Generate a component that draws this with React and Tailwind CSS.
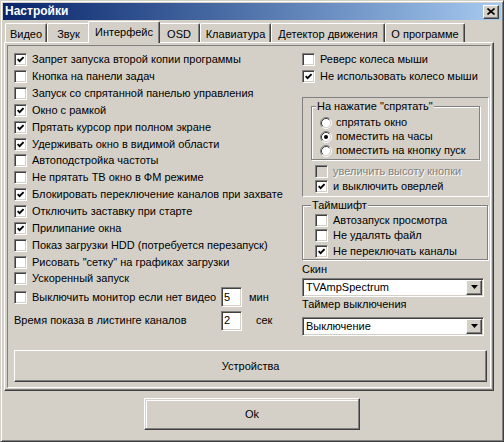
import React from 'react';

const raised =
  'border border-t-white border-l-white border-r-[#404040] border-b-[#404040] shadow-[inset_-1px_-1px_0_#808080]';
const sunken =
  'border border-t-[#808080] border-l-[#808080] border-r-white border-b-white shadow-[inset_1px_1px_0_#404040,inset_-1px_-1px_0_#d4d0c8]';
const etched = 'border border-[#808080] shadow-[1px_1px_0_#fff,inset_1px_1px_0_#fff]';

const tabs = [
  { label: 'Видео', w: 'w-[42px]' },
  { label: 'Звук', w: 'w-[43px]' },
  { label: 'Интерфейс', w: 'w-[72px]', active: true },
  { label: 'OSD', w: 'w-[42px]' },
  { label: 'Клавиатура', w: 'w-[71px]' },
  { label: 'Детектор движения', w: 'w-[114px]' },
  { label: 'О программе', w: 'w-[80px]' },
];

const leftChecks = [
  ['Запрет запуска второй копии программы', true],
  ['Кнопка на панели задач', false],
  ['Запуск со спрятанной панелью управления', false],
  ['Окно с рамкой', true],
  ['Прятать курсор при полном экране', true],
  ['Удерживать окно в видимой области', true],
  ['Автоподстройка частоты', false],
  ['Не прятать ТВ окно в ФМ режиме', false],
  ['Блокировать переключение каналов при захвате', true],
  ['Отключить заставку при старте', true],
  ['Прилипание окна', true],
  ['Показ загрузки HDD (потребуется перезапуск)', false],
  ['Рисовать "сетку" на графиках загрузки', false],
  ['Ускоренный запуск', false],
];

function CheckBox({ checked, disabled }) {
  return (
    <span
      className={`flex h-[13px] w-[13px] shrink-0 items-center justify-center ${sunken} ${
        disabled ? 'bg-[#d4d0c8]' : 'bg-white'
      }`}
    >
      {checked && (
        <svg width="7" height="7" viewBox="0 0 7 7">
          <path d="M0.6 3.1 L2.6 5.1 L6.5 1.1" stroke="#000" strokeWidth="1.8" fill="none" />
        </svg>
      )}
    </span>
  );
}

function Check({ label, checked, disabled, h = 'h-[16.85px]' }) {
  return (
    <div className={`flex items-center gap-[5px] whitespace-nowrap ${h}`}>
      <CheckBox checked={checked} disabled={disabled} />
      <span className={disabled ? 'text-[#808080] [text-shadow:1px_1px_0_#fff]' : ''}>{label}</span>
    </div>
  );
}

function Radio({ label, checked }) {
  return (
    <div className="flex h-[14px] items-center gap-[4px] whitespace-nowrap">
      <svg width="12" height="12" viewBox="0 0 12 12" className="shrink-0">
        <circle cx="6" cy="6" r="4.5" fill="#fff" />
        <path d="M2.11 9.89 A5.5 5.5 0 0 1 9.89 2.11" stroke="#808080" fill="none" />
        <path d="M9.89 2.11 A5.5 5.5 0 0 1 2.11 9.89" stroke="#fff" fill="none" />
        <path d="M2.82 9.18 A4.5 4.5 0 0 1 9.18 2.82" stroke="#404040" fill="none" />
        <path d="M9.18 2.82 A4.5 4.5 0 0 1 2.82 9.18" stroke="#d4d0c8" fill="none" />
        {checked && <circle cx="6" cy="6" r="2" fill="#000" />}
      </svg>
      <span>{label}</span>
    </div>
  );
}

function Field({ value }) {
  return (
    <div className={`flex h-[20px] w-[21px] shrink-0 items-center bg-white pl-[2px] ${sunken}`}>
      {value}
    </div>
  );
}

function Combo({ value }) {
  return (
    <div className={`flex h-[19px] w-[182px] items-center bg-white p-[1px] ${sunken}`}>
      <span className="flex-1 pl-[2px]">{value}</span>
      <span className={`flex h-[15px] w-[16px] items-center justify-center bg-[#d4d0c8] ${raised}`}>
        <svg width="7" height="4" viewBox="0 0 7 4">
          <path d="M0 0 H7 L3.5 4 Z" fill="#000" />
        </svg>
      </span>
    </div>
  );
}

function GroupTitle({ children, left }) {
  return (
    <span className={`absolute top-[-7px] ${left} bg-[#d4d0c8] px-[1px] leading-[13px]`}>{children}</span>
  );
}

export default function App() {
  return (
    <div className="h-[442px] w-[504px] overflow-hidden border border-t-[#d4d0c8] border-l-[#d4d0c8] border-r-[#404040] border-b-[#404040] bg-[#d4d0c8] p-[2px] font-['Liberation_Sans',Arial,sans-serif] text-[11px] leading-[13px] text-black shadow-[inset_1px_1px_0_#fff,inset_-1px_-1px_0_#808080]">
      {/* Title bar */}
      <div className="flex h-[17px] items-center bg-linear-to-r from-[#0a246a] to-[#a6caf0] pl-[2px] pr-[2px]">
        <span className="flex-1 text-[12px] font-bold text-white">Настройки</span>
        <span className={`flex h-[14px] w-[16px] items-center justify-center bg-[#d4d0c8] ${raised}`}>
          <svg width="8" height="7" viewBox="0 0 8 7">
            <path d="M0.5 0.5 L7.5 6.5 M7.5 0.5 L0.5 6.5" stroke="#000" strokeWidth="1.6" />
          </svg>
        </span>
      </div>

      {/* Tabs */}
      <div className="mt-[1px] ml-[2px] flex h-[21px] items-end">
        {tabs.map((t) =>
          t.active ? (
            <div
              key={t.label}
              className={`relative z-10 mx-[-2px] mb-[-1px] flex h-[22px] ${t.w} items-center justify-center rounded-t-[2px] border-t border-l border-r border-t-white border-l-white border-r-[#404040] bg-[#d4d0c8] shadow-[inset_-1px_0_0_#808080]`}
            >
              {t.label}
            </div>
          ) : (
            <div
              key={t.label}
              className={`flex h-[19px] ${t.w} items-center justify-center rounded-t-[2px] border-t border-l border-r border-t-white border-l-white border-r-[#404040] pt-[2px] shadow-[inset_-1px_0_0_#808080]`}
            >
              {t.label}
            </div>
          )
        )}
      </div>

      {/* Tab panel */}
      <div className={`ml-[1px] h-[349px] w-[490px] p-[2px] ${raised}`}>
        <div className="h-full border border-t-[#808080] border-l-[#808080] border-r-white border-b-white pt-[5.5px] pl-[6px]">
          <div className="flex h-[298.5px]">
            {/* Left column */}
            <div className="w-[288px]">
              {leftChecks.map(([label, checked]) => (
                <Check key={label} label={label} checked={checked} />
              ))}
              <div className="flex h-[20px] items-center">
                <div className="w-[207px]">
                  <Check label="Выключить монитор если нет видео" checked={false} h="h-[20px]" />
                </div>
                <Field value="5" />
                <span className="ml-[7px]">мин</span>
              </div>
              <div className="mt-[3.5px] flex h-[20px] items-center">
                <span className="w-[207px] whitespace-nowrap">Время показа в листинге каналов</span>
                <Field value="2" />
                <span className="ml-[14px]">сек</span>
              </div>
            </div>

            {/* Right column */}
            <div className="w-[187px]">
              <Check label="Реверс колеса мыши" checked={false} />
              <Check label="Не использовать колесо мыши" checked />

              <div className="mt-[11.8px] h-[100px] border border-t-[#808080] border-l-[#808080] border-r-white border-b-white">
                <div className={`relative mt-[8px] ml-[8px] h-[54px] w-[169px] pt-[9px] pl-[8px] ${etched}`}>
                  <GroupTitle left="left-[4px]">На нажатие "спрятать"</GroupTitle>
                  <Radio label="спрятать окно" />
                  <Radio label="поместить на часы" checked />
                  <Radio label="поместить на кнопку пуск" />
                </div>
                <div className="mt-[4px] ml-[12px]">
                  <Check label="увеличить высоту кнопки" disabled h="h-[15px]" />
                  <Check label="и выключить оверлей" checked h="h-[15px]" />
                </div>
              </div>

              <div className={`relative mt-[8px] h-[55px] w-[186px] pt-[6.5px] pl-[12px] ${etched}`}>
                <GroupTitle left="left-[8px]">Таймшифт</GroupTitle>
                <Check label="Автозапуск просмотра" checked={false} h="h-[15.5px]" />
                <Check label="Не удалять файл" checked={false} h="h-[15.5px]" />
                <Check label="Не переключать каналы" checked h="h-[15.5px]" />
              </div>

              <div className="mt-[3.5px] h-[13px]">Скин</div>
              <div className="mt-[1.5px]">
                <Combo value="TVAmpSpectrum" />
              </div>
              <div className="mt-[1.5px] h-[13px]">Таймер выключения</div>
              <div className="mt-[5.2px]">
                <Combo value="Выключение" />
              </div>
            </div>
          </div>

          <button className={`flex h-[32px] w-[473px] items-center justify-center bg-[#d4d0c8] ${raised}`}>
            Устройства
          </button>
        </div>
      </div>

      {/* Ok */}
      <button
        className={`mx-auto mt-[7px] flex h-[32px] w-[216px] items-center justify-center bg-[#d4d0c8] border border-t-white border-l-white border-r-[#404040] border-b-[#404040] shadow-[inset_-1px_-1px_0_#808080,inset_1px_1px_0_#d4d0c8,inset_2px_2px_0_#fff]`}
      >
        Ok
      </button>
    </div>
  );
}
